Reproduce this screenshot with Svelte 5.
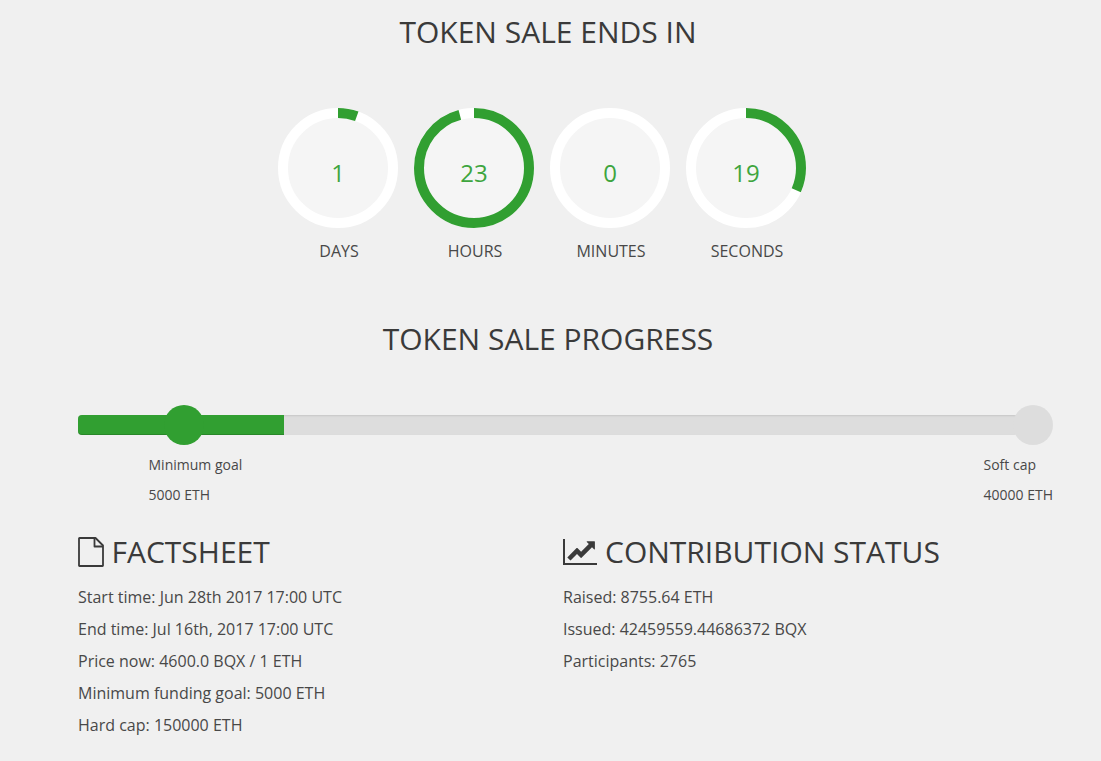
<script lang="ts">
  const clocks = [
    { label: 'Days', value: 1, max: 18 },
    { label: 'Hours', value: 23, max: 24 },
    { label: 'Minutes', value: 0, max: 60 },
    { label: 'Seconds', value: 19, max: 60 },
  ]

  const facts = [
    'Start time: Jun 28th 2017 17:00 UTC',
    'End time: Jul 16th, 2017 17:00 UTC',
    'Price now: 4600.0 BQX / 1 ETH',
    'Minimum funding goal: 5000 ETH',
    'Hard cap: 150000 ETH',
  ]

  const status = [
    'Raised: 8755.64 ETH',
    'Issued: 42459559.44686372 BQX',
    'Participants: 2765',
  ]

  const raised = 8755.64
  const softCap = 40000
</script>

<main>
  <h2 class="title">Token sale ends in</h2>
  <div class="countdown">
    {#each clocks as clock}
      <div class="clock">
        <svg viewBox="0 0 120 120" width="120" height="120">
          <circle cx="60" cy="60" r="55" fill="#f5f5f5" stroke="#fff" stroke-width="10" />
          {#if clock.value > 0}
            <circle
              cx="60" cy="60" r="55" fill="none" stroke="#319f31" stroke-width="10"
              pathLength={clock.max} stroke-dasharray="{clock.value} {clock.max}"
              transform="rotate(-90 60 60)"
            />
          {/if}
          <text x="60" y="74" text-anchor="middle">{clock.value}</text>
        </svg>
        <span>{clock.label}</span>
      </div>
    {/each}
  </div>

  <h2 class="title progress-title">Token sale progress</h2>
  <div class="progress">
    <div class="bar" style="width: {(raised / softCap) * 100}%"></div>
    <i class="dot reached"></i>
    <i class="dot cap"></i>
  </div>
  <div class="goals">
    <p>Minimum goal<br />5000 ETH</p>
    <p>Soft cap<br />40000 ETH</p>
  </div>

  <div class="columns">
    <section>
      <h2>
        <svg class="file" viewBox="0 0 26 30" width="26" height="30" fill="none" stroke="currentColor" stroke-width="1.8" stroke-linejoin="round">
          <path d="M1.500 1h16L25 8.500V28.500q0 .5-.5.5h-23q-.5 0-.5-.5v-27q0-.5.500-.5z" />
          <path d="M16.500 1v8.500H25" />
        </svg>
        Factsheet
      </h2>
      {#each facts as line}<p>{line}</p>{/each}
    </section>
    <section>
      <h2>
        <svg viewBox="0 0 34 26" width="34" height="26" fill="currentColor">
          <path d="M0 0h2v24h32v2H0z" />
          <path d="M31.900 2.700v7.200q0 .4-.3.500t-.6-.1l-2-2L18.500 18.800q-.4.400-.8 0L14 15.100l-6.500 6.500-3.200-3.200 9.300-9.300q.4-.4.800 0l3.700 3.700 7.700-7.700-2-2q-.3-.3-.1-.6t.500-.3h7.200q.5 0 .5.500z" />
        </svg>
        Contribution status
      </h2>
      {#each status as line}<p>{line}</p>{/each}
    </section>
  </div>
</main>

<style>
  :global(body) { background: #f0f0f0; }
  main {
    box-sizing: border-box; height: 761px; padding: 11px 48px 0 78px; overflow: hidden;
    font: 16px/32px "Open Sans", sans-serif; color: #484848;
  }
  h2 { margin: 0; font-size: 30px; line-height: 42px; font-weight: 400; text-transform: uppercase; color: #3a3a3a; }
  p { margin: 0; }
  .title { width: 940px; text-align: center; }
  .countdown { display: flex; gap: 16px; margin: 55px 0 0 200px; }
  .clock { display: flex; flex-direction: column; align-items: center; width: 120px; text-transform: uppercase; }
  .clock svg { display: block; }
  .clock text { font-size: 24px; fill: #3ea53e; }
  .clock span { margin-top: 7px; padding-left: 2px; }
  .progress-title { margin-top: 51px; }
  .progress {
    position: relative; width: 940px; height: 20px; margin-top: 55px; border-radius: 4px;
    background: #ddd; box-shadow: inset 0 1px 2px rgba(0, 0, 0, 0.1);
  }
  .bar { height: 100%; border-radius: 4px 0 0 4px; background: #319f31; box-shadow: inset 0 -1px 0 rgba(0, 0, 0, 0.15); }
  .dot { position: absolute; top: -10px; width: 40px; height: 40px; border-radius: 50%; background: #ddd; }
  .reached { left: 86px; background: #319f31; }
  .cap { right: -35px; }
  .goals { display: flex; justify-content: space-between; margin-top: 15px; padding-left: 70.5px; font-size: 14px; line-height: 30px; }
  .columns { display: flex; margin-top: 21px; }
  section { width: 485px; }
  section h2 { display: flex; align-items: center; gap: 8px; margin-bottom: 8px; }
  .file { margin-right: -0.5px; }
</style>
